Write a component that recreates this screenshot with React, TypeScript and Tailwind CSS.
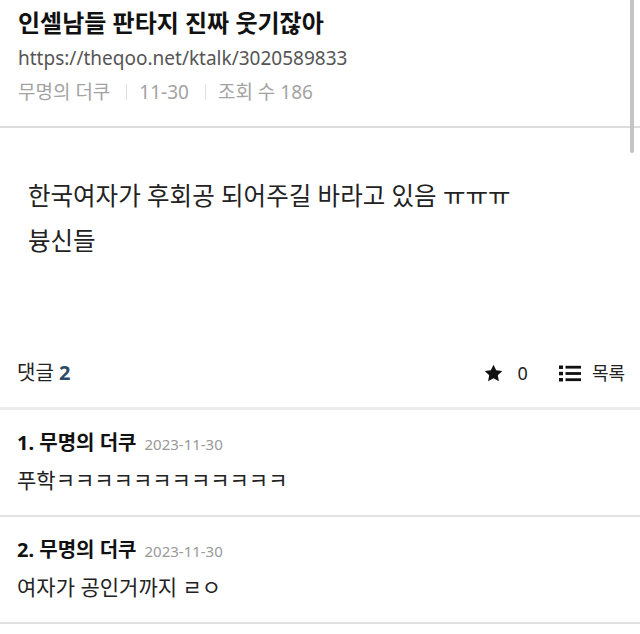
const comments = [
  { no: 1, author: '무명의 더쿠', date: '2023-11-30', text: '푸학ㅋㅋㅋㅋㅋㅋㅋㅋㅋㅋㅋㅋ' },
  { no: 2, author: '무명의 더쿠', date: '2023-11-30', text: '여자가 공인거까지 ㄹㅇ' },
];

function StarIcon() {
  return (
    <svg width="19" height="18" viewBox="0 0 24 23" fill="#111">
      <path d="M12 0.8l3.4 7.1 7.8 1-5.7 5.4 1.4 7.8L12 18.3l-6.9 3.8 1.4-7.8L0.8 8.9l7.8-1z" />
    </svg>
  );
}

function ListIcon() {
  return (
    <svg width="22" height="17" viewBox="0 0 22 17" fill="#111">
      <rect x="0" y="0.5" width="4" height="3.5" />
      <rect x="0" y="6.8" width="4" height="3.5" />
      <rect x="0" y="13" width="4" height="3.5" />
      <rect x="6.5" y="0.8" width="15.5" height="2.8" />
      <rect x="6.5" y="7.1" width="15.5" height="2.8" />
      <rect x="6.5" y="13.3" width="15.5" height="2.8" />
    </svg>
  );
}

export default function App() {
  return (
    <div
      className="relative w-[640px] h-[634px] overflow-hidden bg-white text-[#222]"
      style={{ fontFamily: '"Noto Sans", "Noto Sans CJK KR", sans-serif' }}
    >
      {/* header */}
      <div className="px-[18px] pt-[8px] pb-[19px]">
        <h1 className="text-[24px] leading-[30px] font-bold text-[#111]">인셀남들 판타지 진짜 웃기잖아</h1>
        <div className="mt-[5px] text-[19px] leading-[30px] text-[#555]">https://theqoo.net/ktalk/3020589833</div>
        <div className="mt-[4px] flex items-center text-[19px] leading-[30px] text-[#a3a3a3]">
          <span>무명의 더쿠</span>
          <span className="ml-[16px] mr-[12px] h-[16px] w-px bg-[#dedede]" />
          <span>11-30</span>
          <span className="ml-[16px] mr-[12px] h-[16px] w-px bg-[#dedede]" />
          <span>조회 수 186</span>
        </div>
      </div>
      <div className="h-[2px] bg-[#dcdcdc]" />

      {/* body */}
      <div className="px-[28px] pt-[45px] pb-[90px] text-[24.5px] leading-[45px] text-[#222]">
        <p>한국여자가 후회공 되어주길 바라고 있음 ㅠㅠㅠ</p>
        <p>븅신들</p>
      </div>

      {/* comment bar */}
      <div className="flex h-[40px] items-center justify-between pl-[17px] pr-[15px] mb-[14px]">
        <div className="text-[20px]">
          댓글 <span className="font-bold text-[#2d4a68]">2</span>
        </div>
        <div className="flex items-center text-[18px] text-[#222]">
          <StarIcon />
          <span className="ml-[15px]">0</span>
          <span className="ml-[31px] flex items-center">
            <ListIcon />
          </span>
          <span className="ml-[11px]">목록</span>
        </div>
      </div>
      <div className="h-[3px] bg-[#ececec]" />

      {/* comments */}
      {comments.map((c) => (
        <div key={c.no}>
          <div className="px-[17px] pt-[19px] pb-[21px]">
            <div className="flex items-baseline leading-[28px]">
              <span className="text-[20px] font-bold text-[#111]">
                {c.no}. {c.author}
              </span>
              <span className="ml-[8px] text-[15px] text-[#999]">{c.date}</span>
            </div>
            <div className="mt-[8px] text-[21px] leading-[28px] text-[#222]">{c.text}</div>
          </div>
          <div className="h-[2px] bg-[#e2e2e2]" />
        </div>
      ))}

      {/* scroll indicator */}
      <div className="absolute right-[6px] top-0 h-[153px] w-[4px] rounded-b-full bg-[#c4c4c4]" />
    </div>
  );
}
